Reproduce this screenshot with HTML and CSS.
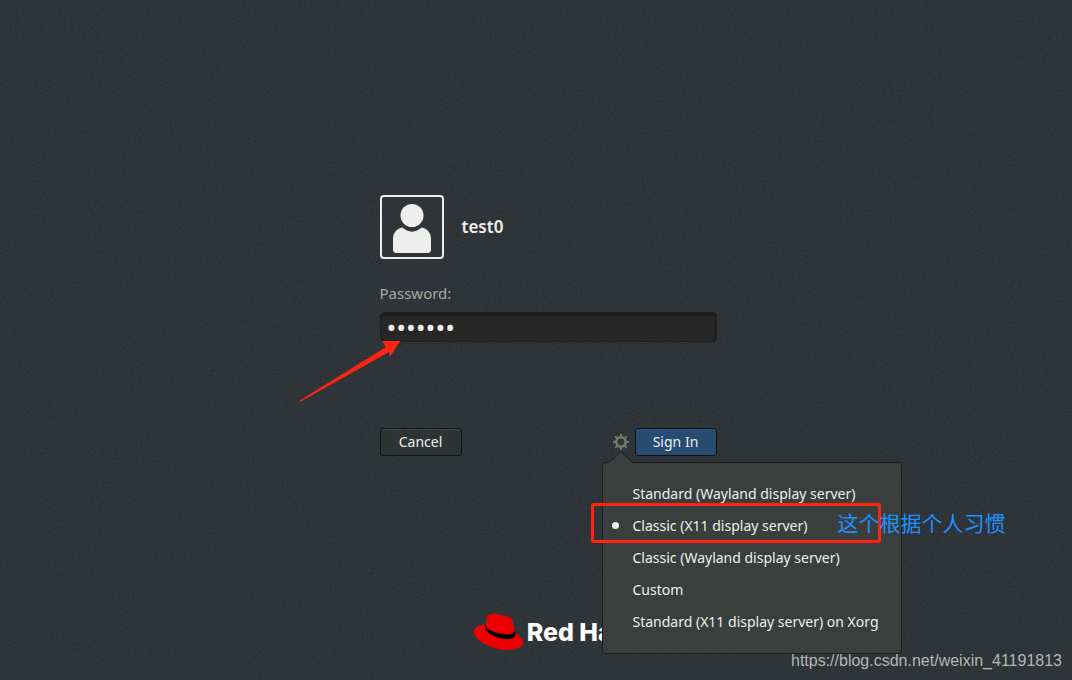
FILE: index.html
```
<!DOCTYPE html>
<html lang="en">
<head>
    <meta charset="UTF-8">
    <meta name="viewport" content="width=device-width, initial-scale=1.0">
    <title>Sign In</title>
    <link rel="stylesheet" href="styles.css">
</head>
<body>
    <svg class="grain" aria-hidden="true">
        <filter id="noise">
            <feTurbulence type="fractalNoise" baseFrequency="0.6" numOctaves="2" seed="4"></feTurbulence>
            <feColorMatrix values="0 0 0 0 0.6  0 0 0 0 0.65  0 0 0 0 0.65  0.9 0 0 0 -0.36"></feColorMatrix>
        </filter>
        <rect width="100%" height="100%" filter="url(#noise)"></rect>
    </svg>

    <main class="login">
        <form class="login-form">
            <div class="user">
                <div class="avatar">
                    <svg width="60" height="60" viewBox="0 0 60 60" aria-hidden="true">
                        <circle cx="30" cy="18.5" r="11.5" fill="#eeeeec"/>
                        <path d="M20.5 30.5C26 36 34 36 39.500 30.500C45.500 31.500 49 36 49 42V52.500Q49 56 45.500 56H14.500Q11 56 11 52.500V42C11 36 14.500 31.500 20.500 30.500Z" fill="#eeeeec"/>
                    </svg>
                </div>
                <div class="username">test0</div>
            </div>

            <label class="password-label" for="password">Password:</label>
            <div class="password-row">
                <input class="password-input" id="password" type="password" value="redhat0">
                <svg class="arrow" width="104" height="64" viewBox="0 0 104 64" aria-hidden="true">
                    <path d="M84 0H102L92 16L91 11L2 61L1 60L88 6Z" fill="#ff2412"/>
                </svg>
            </div>

            <div class="buttons">
                <button class="btn" type="button">Cancel</button>
                <div class="session">
                    <button class="gear-btn" type="button" aria-label="Session">
                        <svg width="16" height="16" viewBox="0 0 16 16" aria-hidden="true">
                            <circle cx="8" cy="8" r="4.700" fill="none" stroke="#78776d" stroke-width="2.600"/>
                            <g stroke="#78776d" stroke-width="2">
                                <path d="M8 0V3M8 13V16M0 8H3M13 8H16"/>
                                <path d="M2.300 2.300L4.500 4.500M11.500 11.500L13.700 13.700M2.300 13.700L4.500 11.500M11.500 4.500L13.700 2.300"/>
                            </g>
                        </svg>
                    </button>
                    <div class="session-menu">
                        <svg class="menu-tip" width="24" height="12" viewBox="0 0 24 12" aria-hidden="true">
                            <path d="M0 12L1 11L12 0.500L23 11L24 12Z" fill="#3a3f3e"/>
                            <path d="M0 11.500L12 0.700L24 11.500" fill="none" stroke="#1b1f20"/>
                        </svg>
                        <label class="session-item"><input type="radio" name="session">Standard (Wayland display server)</label>
                        <label class="session-item"><input type="radio" name="session" checked>Classic (X11 display server)</label>
                        <label class="session-item"><input type="radio" name="session">Classic (Wayland display server)</label>
                        <label class="session-item"><input type="radio" name="session">Custom</label>
                        <label class="session-item"><input type="radio" name="session">Standard (X11 display server) on Xorg</label>
                        <div class="highlight"></div>
                        <div class="note" lang="zh-CN">这个根据个人习惯</div>
                    </div>
                </div>
                <button class="btn btn-primary" type="submit">Sign In</button>
            </div>
        </form>

        <div class="logo">
            <svg width="50" height="38" viewBox="0 0 50 38" aria-hidden="true">
                <path d="M12 12C5 11 0 14 0 19C0 27 17 37 34 37C44 37 50 33 49 29C48 25 45 22 41 20L38 6C37 4 30 2 26 2C24 2 23 0 20 0.500C17 1 17 2 15 1.500C13 2 13 4 12 12Z" fill="#ee0000"/>
                <path d="M11.500 12C9 18 19 24 31 26C37 27 42 25 41.500 20.500L40.500 17C41 21 36 22 30 21C20 20 12 16 11.500 12Z" fill="#000"/>
            </svg>
            <span class="logo-text">Red Hat</span>
        </div>
    </main>

    <div class="watermark">https://blog.csdn.net/weixin_41191813</div>
</body>
</html>
```
FILE: styles.css
```
* {
    box-sizing: border-box;
}

body {
    position: relative;
    min-height: 100vh;
    margin: 0;
    overflow: hidden;
    background-color: #2c3235;
    color: #eeeeec;
    font-family: "Noto Sans", "Open Sans", sans-serif;
    font-size: 14px;
}

.grain {
    position: absolute;
    width: 100%;
    height: 100%;
    opacity: 0.15;
}

.login {
    position: relative;
    display: flex;
    flex-direction: column;
    align-items: center;
    padding: 195px 0 0 24px;
}

.login-form {
    width: 337px;
}

.user {
    display: flex;
    align-items: center;
    gap: 18px;
}

.avatar {
    width: 64px;
    height: 64px;
    border: 2px solid #eeeeec;
    border-radius: 4px;
}

.avatar svg {
    display: block;
}

.username {
    padding-bottom: 2px;
    font-size: 17px;
    font-weight: 600;
}

.password-label {
    display: block;
    margin-top: 24px;
    color: #a8a9a2;
    font-size: 15px;
    line-height: 20px;
}

.password-row {
    position: relative;
    margin-top: 9px;
}

.password-input {
    display: block;
    width: 100%;
    height: 30px;
    padding: 0 6px;
    border: 1px solid #1c1f1f;
    border-radius: 4px;
    outline: none;
    background-color: #272727;
    box-shadow: inset 0 2px 3px #1a1a1a;
    color: #eeeeec;
    font-family: "Noto Sans", sans-serif;
    font-size: 26px;
}

.arrow {
    position: absolute;
    top: 29px;
    left: -82px;
}

.buttons {
    display: flex;
    align-items: center;
    margin-top: 86px;
}

.btn {
    width: 82px;
    height: 28px;
    padding: 0 0 2px;
    border: 1px solid #0f1213;
    border-radius: 3px;
    background-color: #2e3436;
    box-shadow: inset 0 1px #43484a;
    color: #eeeeec;
    font-family: inherit;
    font-size: 14px;
}

.btn-primary {
    background-color: #284b72;
    box-shadow: inset 0 1px #315378;
}

.session {
    position: relative;
    margin-left: auto;
    margin-right: 6px;
}

.gear-btn {
    display: block;
    padding: 0;
    border: none;
    background: none;
}

.gear-btn svg {
    display: block;
}

.session-menu {
    position: absolute;
    top: 28px;
    left: -11px;
    z-index: 1;
    width: 300px;
    padding: 14px 0 16px;
    border: 1px solid #1b1f20;
    border-radius: 4px;
    background-color: #3a3f3e;
}

.menu-tip {
    position: absolute;
    top: -12px;
    left: 6px;
}

.session-item {
    display: flex;
    align-items: center;
    height: 32px;
    padding-left: 9px;
    white-space: nowrap;
}

.session-item input {
    width: 7px;
    height: 7px;
    margin: 0 14px 0 0;
    border-radius: 50%;
    appearance: none;
}

.session-item input:checked {
    background-color: #eeeeec;
}

.highlight {
    position: absolute;
    top: 40px;
    left: -12px;
    width: 290px;
    height: 40px;
    border: 3px solid #ff2412;
    border-radius: 3px;
}

.note {
    position: absolute;
    top: 44px;
    left: 235px;
    color: #1e90ff;
    font-family: "Noto Sans CJK SC", sans-serif;
    font-size: 21px;
    line-height: 30px;
    white-space: nowrap;
}

.logo {
    display: flex;
    align-items: center;
    gap: 3px;
    margin-top: 157px;
}

.logo-text {
    color: #fff;
    font-family: Inter, sans-serif;
    font-size: 25px;
    font-weight: 800;
    line-height: 38px;
}

.watermark {
    position: absolute;
    right: 10px;
    bottom: 10px;
    color: #b4b6b7;
    font-family: "Liberation Sans", sans-serif;
    font-size: 16px;
}
```
